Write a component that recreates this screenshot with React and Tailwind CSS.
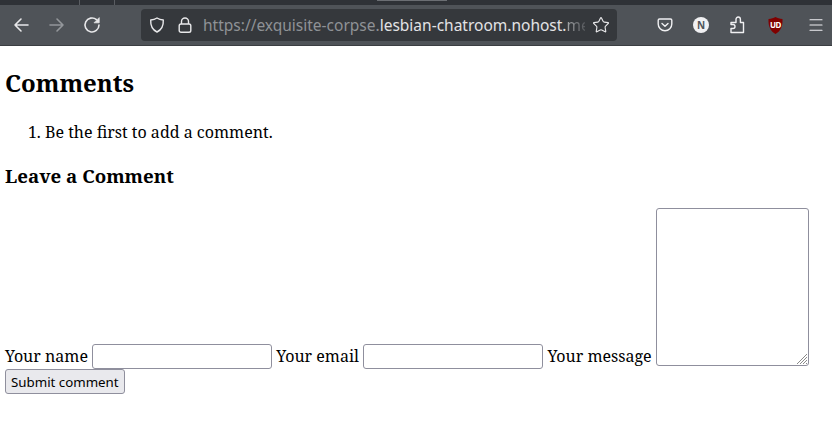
import { Menu, Star } from "lucide-react";

function Toolbar() {
  return (
    <div className="h-[46px] bg-[#2f3237] font-['Noto_Sans',sans-serif]">
      {/* what shows of the tab strip above the toolbar */}
      <div className="flex h-[5px]">
        <div className="ml-[79px] h-full w-px bg-[#5a5d62]" />
        <div className="ml-[34px] h-full w-px bg-[#5a5d62]" />
        <div className="ml-[262px] h-px w-[70px] bg-[#6b6e73]" />
      </div>
      <div className="flex h-[41px] items-center bg-[#4f5358] border-b border-[#3b3e42]">
        <div className="flex items-center gap-[11px] pl-[10px] w-[141px] text-[#e8e8ea]">
          <svg width="24" height="24" viewBox="0 0 24 24" fill="none" stroke="currentColor" strokeWidth="1.6" strokeLinecap="round" strokeLinejoin="round"><path d="M18 12H5M11 6l-6 6 6 6" /></svg>
          <svg width="24" height="24" viewBox="0 0 24 24" fill="none" stroke="#94979b" strokeWidth="1.6" strokeLinecap="round" strokeLinejoin="round"><path d="M5 12h13M12 6l6 6-6 6" /></svg>
          <svg width="24" height="24" viewBox="0 0 24 24" fill="none" stroke="currentColor" strokeWidth="1.6" strokeLinecap="round" strokeLinejoin="round"><path d="M19 12a7 7 0 1 1-2.500-5.400" /><path d="M19.200 5v4.800h-4.800z" fill="currentColor" strokeWidth="0.800" /></svg>
        </div>
        <div className="flex h-8 w-[476px] items-center rounded bg-[#35383c] text-[#e8e8ea]">
          <svg className="ml-2 shrink-0" width="16" height="18" viewBox="0 0 16 18" fill="none" stroke="currentColor" strokeWidth="1.4" strokeLinejoin="round"><path d="M8 2c2 1.300 4 1.800 6.300 2 .3 5.800-1.700 9.800-6.300 12C3.400 13.800 1.400 9.800 1.700 4 4 3.800 6 3.300 8 2z" /></svg>
          <svg className="ml-[13px] shrink-0" width="14" height="18" viewBox="0 0 14 18" fill="none" stroke="currentColor" strokeWidth="1.4"><path d="M3.500 8V5.500a3.500 3.500 0 0 1 7 0V8" /><rect x="1.200" y="8" width="11.600" height="8.300" rx="1.800" /></svg>
          <div className="ml-[11px] w-[382px] overflow-hidden whitespace-nowrap pt-px text-[15.500px] text-[#e3e3e5]">
            <span className="text-[#8f9296]">https://exquisite-corpse.</span>lesbian-chatroom.nohost.<span className="bg-gradient-to-r from-[#a5a7aa] to-[#3f4246] bg-clip-text text-transparent">me</span>
          </div>
          <Star className="ml-[7px] shrink-0" size={18} strokeWidth={1.5} />
        </div>
        <div className="flex items-center text-[#f0f0f2]">
          <svg className="ml-10 shrink-0" width="16" height="16" viewBox="0 0 16 16" fill="none" stroke="currentColor" strokeWidth="1.4" strokeLinecap="round" strokeLinejoin="round"><path d="M2.500 2h11c.8 0 1.300.5 1.300 1.300V7c0 3.700-3 6.800-6.800 6.800S1.200 10.700 1.200 7V3.300C1.200 2.500 1.700 2 2.500 2z" /><path d="M5 6.500l3 2.800 3-2.800" /></svg>
          <div className="ml-5 flex size-4 items-center justify-center rounded-full bg-[#f0f0f2] text-[10px] font-bold leading-none text-[#4f5358]">N</div>
          <svg className="ml-[20px] shrink-0" width="17" height="18" viewBox="0 0 17 18" fill="none" stroke="currentColor" strokeWidth="1.4" strokeLinejoin="round"><path d="M2 6.500h5V3.200a2.200 2.200 0 0 1 4.400 0v3.300h3.100v10h-12.500v-4h2a2 2 0 0 0 0-4h-2z" /></svg>
          <div className="relative ml-[22px] flex">
            <svg width="15" height="17" viewBox="0 0 15 17"><path d="M7.500 0c2 1.200 4 1.700 7 2 .3 7-1.700 12-7 15-5.300-3-7.300-8-7-15 3-.3 5-.8 7-2z" fill="#800000" /></svg>
            <span className="absolute left-[2px] top-[4px] text-[8px] font-bold leading-none tracking-[-0.5px] text-white">UD</span>
          </div>
          <Menu className="ml-[24px] shrink-0" size={18} strokeWidth={1.5} />
        </div>
      </div>
    </div>
  );
}

export default function App() {
  return (
    <div className="h-[421px] overflow-hidden bg-white text-black">
      <Toolbar />
      <div className="px-[5px] font-['Noto_Serif','DejaVu_Serif',serif] text-[16px] leading-[22px]">
        <h1 className="mt-[20px] text-[24px] font-bold leading-[33px]">Comments</h1>
        <ol className="mt-[22px] list-decimal pl-[40px]">
          <li>Be the first to add a comment.</li>
        </ol>
        <h3 className="mt-[20px] text-[18.720px] font-bold leading-[25px]">Leave a Comment</h3>
        <form className="mt-[20px]">
          <label htmlFor="name">Your name</label>{" "}
          <input id="name" type="text" className="h-[25px] w-[180px] rounded-[3px] border border-[#8f8f9d] bg-white align-baseline" />{" "}
          <label htmlFor="email">Your email</label>{" "}
          <input id="email" type="text" className="h-[25px] w-[180px] rounded-[3px] border border-[#8f8f9d] bg-white align-baseline" />{" "}
          <label htmlFor="message">Your message</label>{" "}
          <span className="relative inline-block h-[158px] w-[153px] align-[-4px]">
            <textarea id="message" className="block h-full w-full resize-none rounded-[3px] border border-[#8f8f9d] bg-white" />
            <svg className="absolute bottom-[2px] right-[2px]" width="10" height="10" viewBox="0 0 10 10" stroke="#8a8a8a" strokeWidth="1"><path d="M0 10L10 0M3 10l7-7M6 10l4-4M9 10l1-1" /></svg>
          </span>
          <br />
          <button type="button" className="h-[25px] rounded-[3px] border border-[#8f8f9d] bg-[#e9e9ed] px-[5px] pt-[3px] font-['Noto_Sans',sans-serif] text-[13.300px] leading-none">Submit comment</button>
        </form>
      </div>
    </div>
  );
}
